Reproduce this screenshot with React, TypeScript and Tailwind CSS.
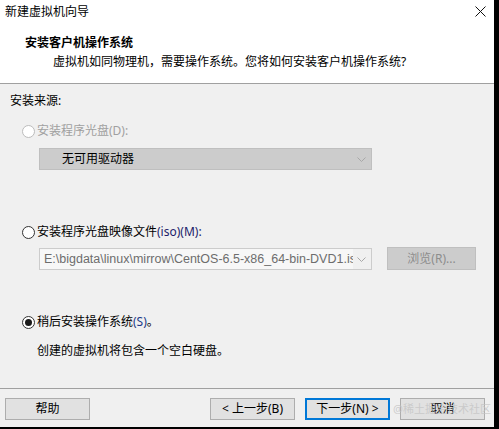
import React from 'react';

const font = { fontFamily: '"Noto Sans", "Noto Sans CJK SC", sans-serif' };

const Radio: React.FC<{ checked?: boolean; disabled?: boolean }> = ({ checked, disabled }) => (
  <span
    className={`w-[13px] h-[13px] rounded-full border flex items-center justify-center bg-white ${
      disabled ? 'border-[#bcbcbc] bg-[#f0f0f0]' : 'border-[#333333]'
    }`}
  >
    {checked && <span className="w-[7px] h-[7px] rounded-full bg-[#1a1a1a]" />}
  </span>
);

const Chevron: React.FC = () => (
  <svg width="9" height="5" viewBox="0 0 9 5" className="text-[#a8a8a8]">
    <path d="M0.5 0.5 L4.5 4.5 L8.5 0.5" fill="none" stroke="currentColor" strokeWidth="1" />
  </svg>
);

const Btn: React.FC<{ label: string; primary?: boolean; className?: string }> = ({ label, primary, className }) => (
  <div
    className={`w-[85px] h-[22px] flex items-center justify-center bg-[#e1e1e1] text-[12px] text-black ${
      primary ? 'border-2 border-[#0078d7]' : 'border border-[#adadad]'
    } ${className ?? ''}`}
  >
    {label}
  </div>
);

const App: React.FC = () => {
  return (
    <div className="w-[499px] h-[429px] bg-black" style={font}>
      <div className="w-[494px] h-[427px] bg-[#f0f0f0] flex flex-col text-[12px] text-black leading-none">
        {/* title bar + header */}
        <div className="h-[84px] bg-white border-b border-[#a0a0a0] flex flex-col">
          <div className="h-[23px] flex items-center justify-between pl-[5px] pr-[8px]">
            <span>新建虚拟机向导</span>
            <svg width="11" height="11" viewBox="0 0 11 11">
              <path d="M0.5 0.5 L10.5 10.5 M10.5 0.5 L0.5 10.5" stroke="#111" strokeWidth="1" />
            </svg>
          </div>
          <div className="mt-[13px] pl-[25px] font-bold h-[13px] flex items-center">安装客户机操作系统</div>
          <div className="mt-[6px] pl-[53px] h-[13px] flex items-center">
            虚拟机如同物理机，需要操作系统。您将如何安装客户机操作系统?
          </div>
        </div>

        {/* body */}
        <div className="h-[304px] flex flex-col">
          <div className="mt-[7px] h-[20px] pl-[10px] flex items-center">安装来源:</div>

          <div className="mt-[10px] h-[20px] pl-[22px] flex items-center gap-[2px] text-[#a0a0a0]">
            <Radio disabled />
            <span>安装程序光盘(D):</span>
          </div>
          <div className="mt-[7px] ml-[39px] w-[333px] h-[22px] bg-[#cccccc] border border-[#bfbfbf] flex items-center justify-between pl-[22px] pr-[5px]">
            <span>无可用驱动器</span>
            <Chevron />
          </div>

          <div className="mt-[52px] h-[20px] pl-[22px] flex items-center gap-[2px]">
            <Radio />
            <span>
              安装程序光盘映像文件<span className="text-[#1c1c6a]">(iso)(M):</span>
            </span>
          </div>
          <div className="mt-[5px] h-[23px] flex items-start">
            <div className="mt-[1px] ml-[39px] w-[333px] h-[22px] bg-[#f0f0f0] border border-[#cccccc] flex items-center justify-between pr-[5px]">
              <span
                className="h-full flex items-center pl-[4px] pr-[1px] bg-[#f7f7f7] text-[#6d6d6d] text-[12.5px] whitespace-nowrap overflow-hidden w-[313px]"
                style={{ fontFamily: '"Liberation Sans", Arial, sans-serif' }}
              >
                E:\bigdata\linux\mirrow\CentOS-6.5-x86_64-bin-DVD1.is
              </span>
              <Chevron />
            </div>
            <div className="ml-[15px] w-[89px] h-[23px] bg-[#cccccc] border border-[#bfbfbf] flex items-center justify-center text-[#8d8d8d]">
              浏览(R)...
            </div>
          </div>

          <div className="mt-[42px] h-[20px] pl-[22px] flex items-center gap-[2px]">
            <Radio checked />
            <span>
              稍后安装操作系统<span className="text-[#1c3a8a]">(S)</span>。
            </span>
          </div>
          <div className="mt-[9px] h-[20px] pl-[37px] flex items-center">创建的虚拟机将包含一个空白硬盘。</div>
        </div>

        {/* footer */}
        <div className="border-t border-[#a0a0a0] flex-1 relative">
          <div className="mt-[9px] flex items-center pl-[5px]">
            <Btn label="帮助" />
            <Btn label="< 上一步(B)" className="ml-[120px]" />
            <Btn label="下一步(N) >" primary className="ml-[10px]" />
            <Btn label="取消" className="ml-[10px]" />
          </div>
          <div className="absolute left-[393px] top-[14px] text-[11px] text-[#c4c4c4]/80 whitespace-nowrap pointer-events-none">
            @稀土掘金技术社区
          </div>
        </div>
      </div>
    </div>
  );
};

export default App;
